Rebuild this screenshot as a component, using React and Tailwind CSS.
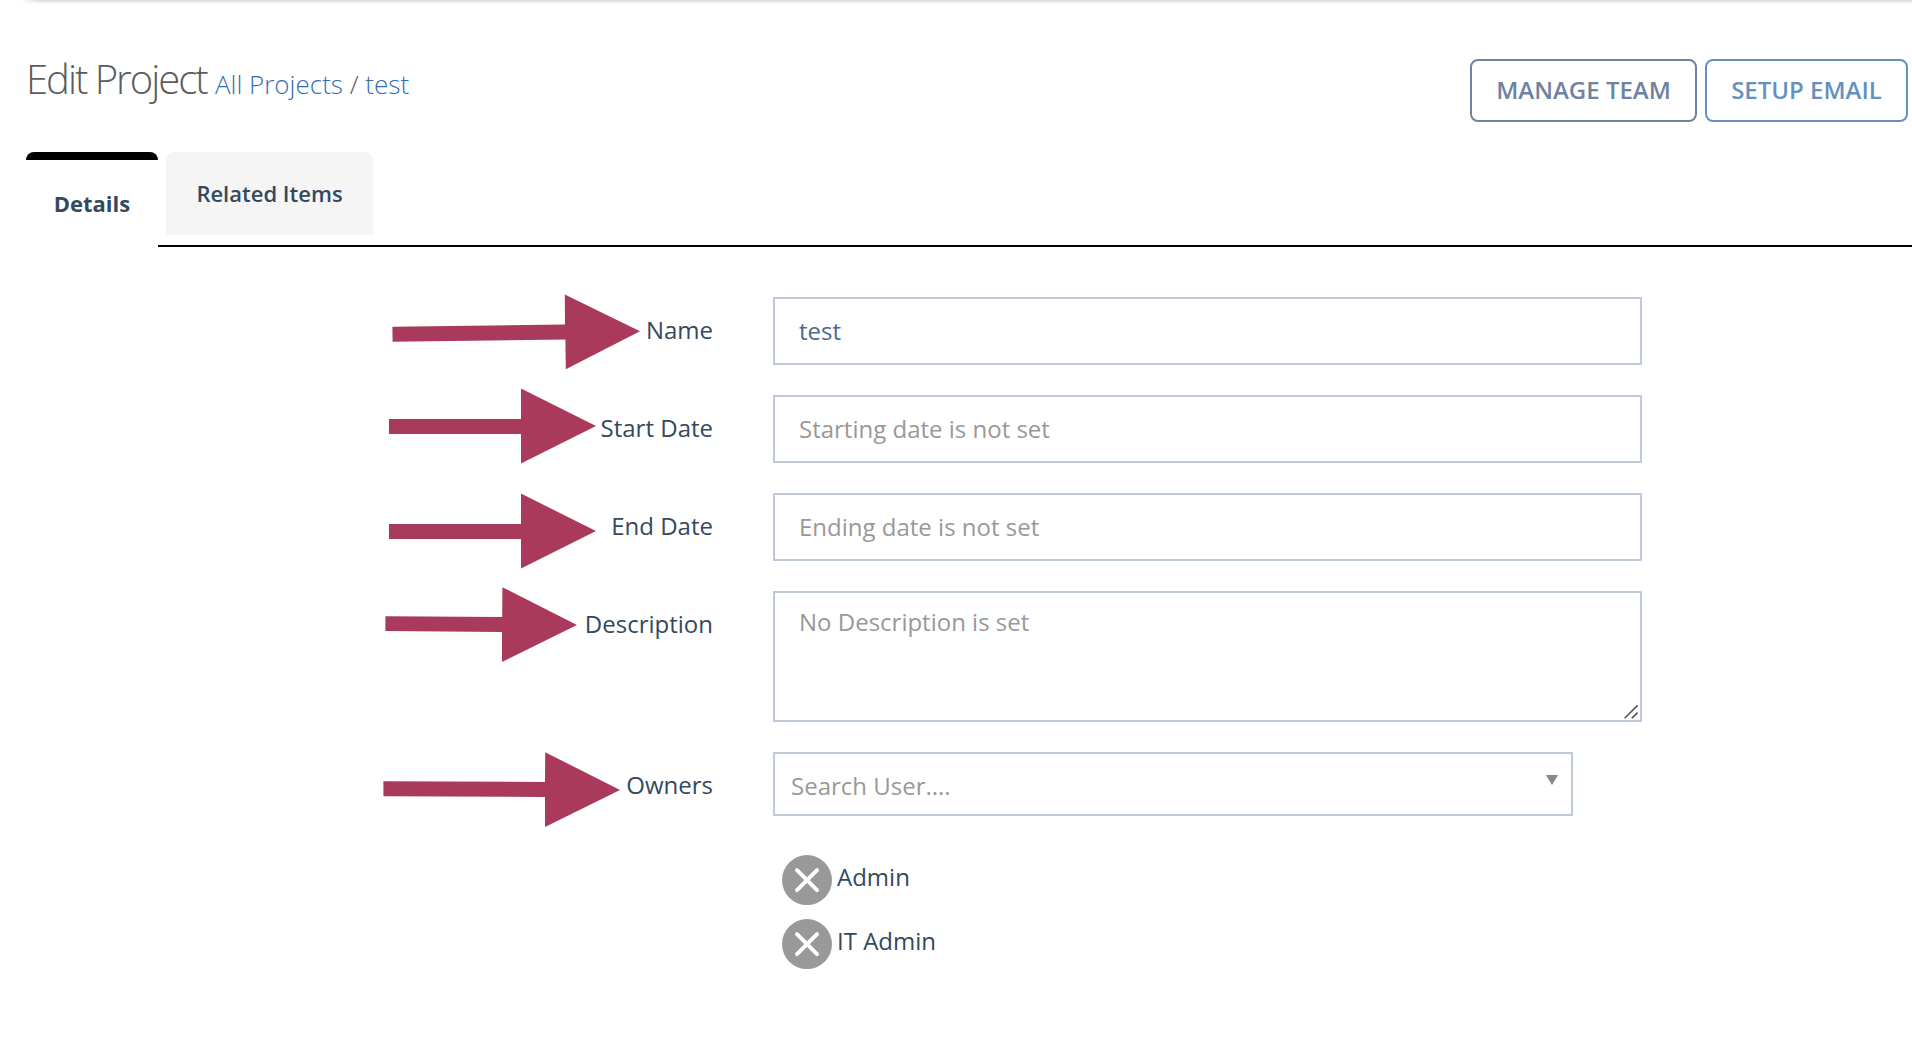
const field =
  "block border-2 border-[#bfc9d9] bg-white text-2xl placeholder:text-[#999] placeholder:opacity-100 outline-none";

const arrows = [
  "392.4,326.8 565,324.4 564.8,294.6 640,331.2 565.8,369.2 565.4,339.4 392.6,341.8",
  "389,419 521,419 521,388.6 596,426 521,463.4 521,434 389,434",
  "389,524 521,524 521,493.6 596,531 521,568.4 521,539 389,539",
  "385.4,616.2 502.2,617 502.4,587.2 577,625 502,662 502,632 385.4,631",
  "383.4,781.2 545,782 545.2,752.2 620,790 545,827 545,797 383.4,796.2",
];

function Row({ label, className, children }) {
  return (
    <div className={`flex items-start ${className}`}>
      <label className="w-[713px] pt-[15px] text-right text-2xl leading-[35px] text-[#34495e]">{label}</label>
      <div className="ml-[60px]">{children}</div>
    </div>
  );
}

function Owner({ name }) {
  return (
    <li className="flex h-16 items-start">
      <button aria-label={`Remove ${name}`} className="mt-px">
        <svg width="51" height="51" viewBox="0 0 51 51">
          <circle cx="25" cy="25.1" r="25" fill="#999" />
          <path d="M15 15.2 35 35.2M35 15.2 15 35.2" stroke="#fff" strokeWidth="4" strokeLinecap="round" />
        </svg>
      </button>
      <span className="ml-1 pt-[5px] text-2xl leading-9 text-[#34495e]">{name}</span>
    </li>
  );
}

export default function App() {
  return (
    <div className="relative h-[1050px] w-[1912px] overflow-hidden bg-white font-['Open_Sans',sans-serif]">
      <div className="ml-5 h-1 bg-linear-to-b from-[#d9d9d9] to-white mask-l-from-[1872px]" />

      <header className="flex h-[148px] items-start justify-between pt-[55px] pr-1 pl-[26px]">
        <h1 className="-mt-[7px] text-[40px] leading-[54px] font-light tracking-[-2px] text-[#5c5c5c]">
          Edit Project{" "}
          <small className="text-[26px] tracking-normal">
            <a className="text-[#346fb3]">All Projects</a> / <a className="text-[#346fb3]">test</a>
          </small>
        </h1>
        <div className="flex gap-2 text-2xl font-semibold">
          <button className="h-[63px] w-[227px] rounded-lg border-2 border-[#6e82a1] pb-[2px] text-[#6e82a1]">
            MANAGE TEAM
          </button>
          <button className="h-[63px] w-[203px] rounded-lg border-2 border-[#6590c0] pb-[2px] text-[#6590c0]">
            SETUP EMAIL
          </button>
        </div>
      </header>

      <nav className="flex h-[95px] items-stretch pl-[26px] text-[22px] text-[#34495e]">
        <div className="w-[132px] overflow-hidden rounded-t-lg">
          <div className="h-2 bg-black" />
          <div className="pt-[27px] text-center leading-8 font-bold">Details</div>
        </div>
        <div className="flex-1 border-b-2 border-black pl-2">
          <div className="h-[83px] w-[207px] rounded-t-lg bg-[#f5f5f5] text-center leading-[83px] font-semibold">
            Related Items
          </div>
        </div>
      </nav>

      <form className="pt-[50px]">
        <Row label="Name" className="h-[98px]">
          <input className={`${field} h-[68px] w-[869px] px-6 pb-[2px] text-[#4c6a8c]`} defaultValue="test" />
        </Row>
        <Row label="Start Date" className="h-[98px]">
          <input className={`${field} h-[68px] w-[869px] px-6 pb-[2px]`} placeholder="Starting date is not set" />
        </Row>
        <Row label="End Date" className="h-[98px]">
          <input className={`${field} h-[68px] w-[869px] px-6 pb-[2px]`} placeholder="Ending date is not set" />
        </Row>
        <Row label="Description" className="h-[161px]">
          <div className="relative">
            <textarea
              className={`${field} h-[131px] w-[869px] resize-none px-6 pt-[11px] leading-[35px]`}
              placeholder="No Description is set"
            />
            <svg className="absolute right-[3px] bottom-[3px]" width="15" height="15" viewBox="0 0 15 15">
              <path d="M.6 14.2 13.6 1.4M7.8 14.2 13.6 8.6" stroke="#555" strokeWidth="1.6" />
            </svg>
          </div>
        </Row>
        <Row label="Owners" className="">
          <div className="flex h-16 w-[800px] items-start justify-between border-2 border-[#bfc9d9] pr-[13px] pl-4">
            <span className="pt-[14px] text-2xl leading-[35px] text-[#999]">Search User....</span>
            <svg className="mt-[21px]" width="12" height="10" viewBox="0 0 12 10">
              <path d="M0 0h12L6 10z" fill="#888" />
            </svg>
          </div>
          <ul className="mt-[38px] ml-[9px]">
            <Owner name="Admin" />
            <Owner name="IT Admin" />
          </ul>
        </Row>
      </form>

      <svg className="pointer-events-none absolute top-0 left-0" width="700" height="850" fill="#a93a5c">
        {arrows.map((points) => (
          <polygon key={points} points={points} />
        ))}
      </svg>
    </div>
  );
}
